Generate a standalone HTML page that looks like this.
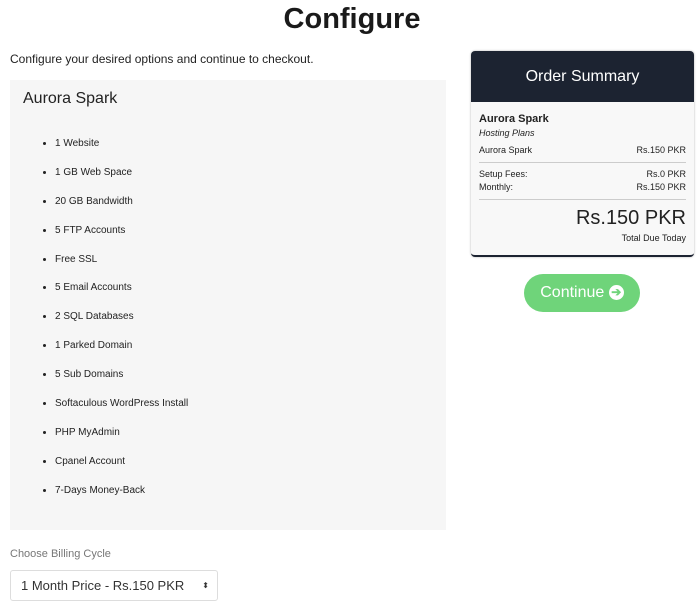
<!DOCTYPE html>
<html><head><style>
body{margin:0;width:700px;height:611px;background:#fff;font-family:"Liberation Sans",sans-serif;color:#222;position:relative;overflow:hidden}
.a{position:absolute}
h1{position:absolute;left:0;width:704px;top:3px;margin:0;text-align:center;font-size:29px;font-weight:bold;color:#1a1a1a}
.panel{left:10px;top:80px;width:436px;height:450px;background:#f6f6f6}
.panel h2{position:absolute;left:13px;top:10px;margin:0;font-size:16px;font-weight:normal}
ul{position:absolute;left:25px;top:50px;margin:0;padding:0 0 0 20px;font-size:10px}
li{height:28.9px;line-height:28.9px}
.card{left:471px;top:51px;width:223px;height:204px;background:#f8f8f8;border-radius:4px;border-bottom:2px solid #1c2331;box-shadow:0 0 2px rgba(0,0,0,.3);overflow:hidden}
.hd{height:51px;background:#1c2331;color:#fff;font-size:16px;text-align:center;line-height:52px}
.r{display:flex;justify-content:space-between;font-size:9px;margin:0 8px;line-height:13px}
hr{border:0;border-top:1px solid #ccc;margin:5px 8px}
.btn{left:524px;top:274px;width:116px;height:38px;border-radius:19px;background:#6fd47a;color:#fff;font-size:16px;line-height:38px;text-align:center}
.sel{left:10px;top:570px;width:206px;height:29px;border:1px solid #ddd;border-radius:3px;font-size:13px;line-height:29px;color:#333}
</style></head><body>
<h1>Configure</h1>
<div class="a" style="left:10px;top:52px;font-size:12px">Configure your desired options and continue to checkout.</div>
<div class="a panel"><h2>Aurora Spark</h2>
<ul><li>1 Website</li><li>1 GB Web Space</li><li>20 GB Bandwidth</li><li>5 FTP Accounts</li><li>Free SSL</li><li>5 Email Accounts</li><li>2 SQL Databases</li><li>1 Parked Domain</li><li>5 Sub Domains</li><li>Softaculous WordPress Install</li><li>PHP MyAdmin</li><li>Cpanel Account</li><li>7-Days Money-Back</li></ul></div>
<div class="a card"><div class="hd">Order Summary</div>
<div style="margin:10px 8px 0;font-size:11px;font-weight:bold;line-height:14px">Aurora Spark</div>
<div style="margin:1px 8px 5px;font-size:9px;font-style:italic;line-height:12px">Hosting Plans</div>
<div class="r"><span>Aurora Spark</span><span>Rs.150 PKR</span></div><hr>
<div class="r"><span>Setup Fees:</span><span>Rs.0 PKR</span></div>
<div class="r"><span>Monthly:</span><span>Rs.150 PKR</span></div><hr>
<div style="text-align:right;margin:6px 8px 0;font-size:20px;line-height:24px">Rs.150 PKR</div>
<div style="text-align:right;margin:3px 8px 0;font-size:9px">Total Due Today</div></div>
<div class="a btn">Continue <span style="display:inline-block;width:15px;height:15px;border-radius:50%;background:#fff;color:#6fd47a;font-size:12px;line-height:15px;vertical-align:1px;font-weight:bold">➔</span></div>
<div class="a" style="left:10px;top:548px;font-size:11px;color:#777">Choose Billing Cycle</div>
<div class="a sel"><span style="margin-left:10px">1 Month Price - Rs.150 PKR</span><span style="position:absolute;right:8px;top:0;font-size:8px">⬍</span></div>
</body></html>
